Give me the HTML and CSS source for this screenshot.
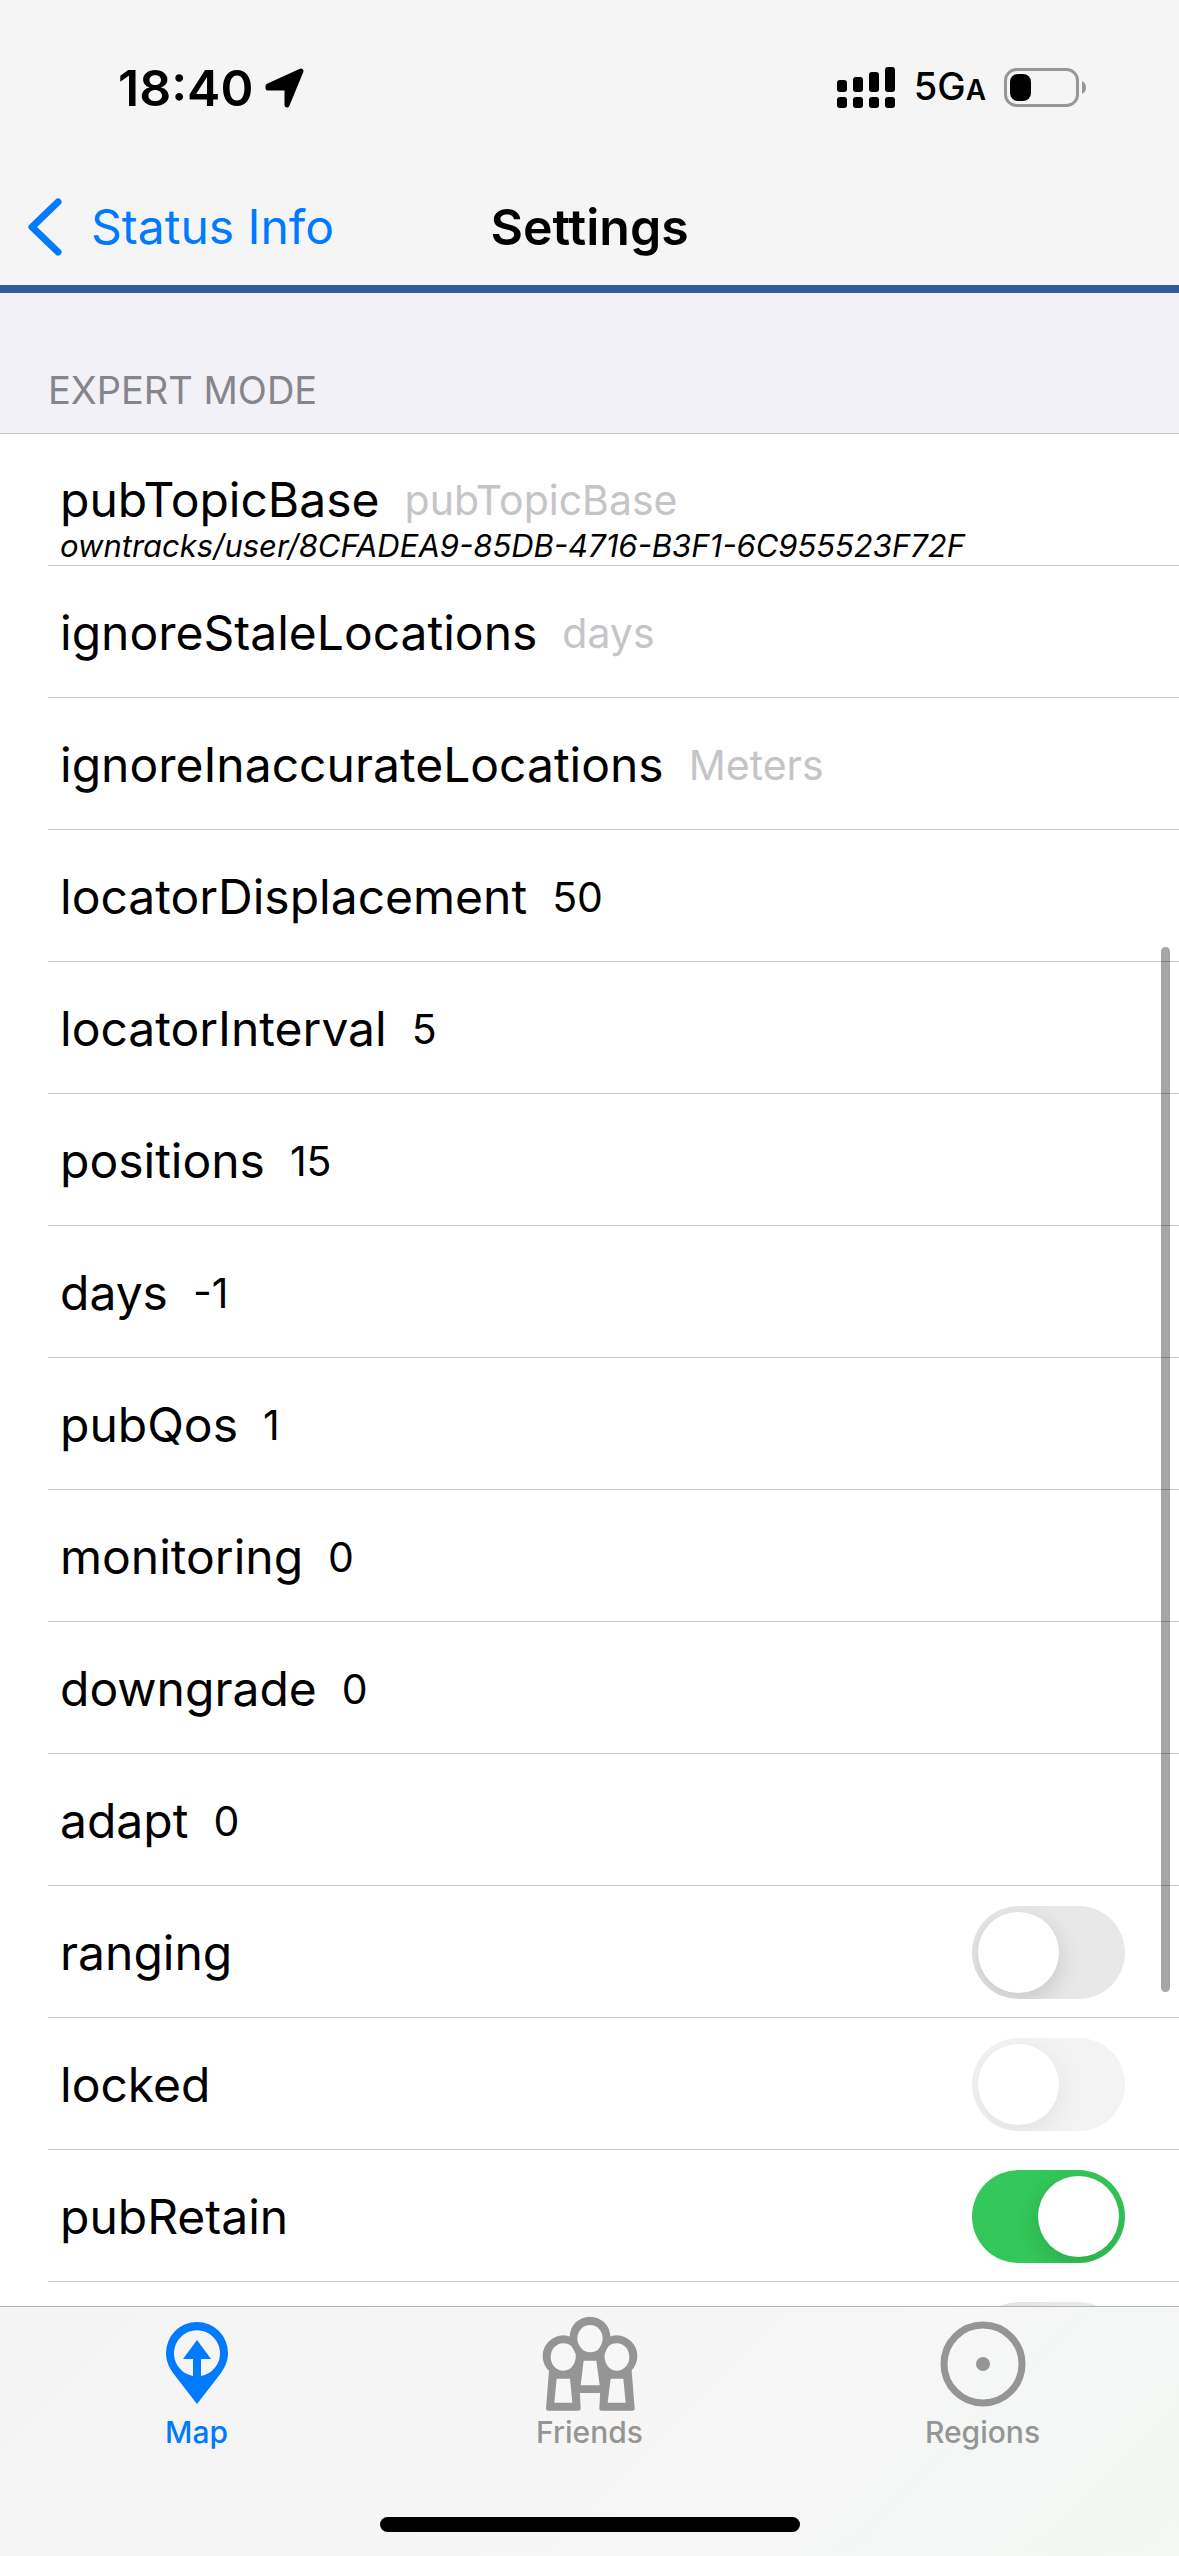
FILE: index.html
```html
<!DOCTYPE html>
<html lang="en">
<head>
    <meta charset="UTF-8">
    <meta name="viewport" content="width=device-width, initial-scale=1.0">
    <title>Settings</title>
    <link rel="stylesheet" href="styles.css">
</head>
<body>
    <header class="header">
        <div class="status-bar">
            <div class="status-left">
                <span class="clock">18:40</span>
                <svg class="location-icon" viewBox="0 0 40 40">
                    <path d="M36 3 L22 37 V20 H3 V18 Z" stroke="currentColor" stroke-width="5" stroke-linejoin="round" fill="currentColor"/>
                </svg>
            </div>
            <div class="status-right">
                <svg class="signal-icon" viewBox="0 0 58 42">
                    <rect x="0" y="13" width="10" height="12" rx="3"/>
                    <rect x="16" y="10" width="10" height="15" rx="3"/>
                    <rect x="32" y="5" width="10" height="20" rx="3"/>
                    <rect x="48" y="0" width="10" height="25" rx="3"/>
                    <rect x="0" y="30" width="10" height="11" rx="3"/>
                    <rect x="16" y="30" width="10" height="11" rx="3"/>
                    <rect x="32" y="30" width="10" height="11" rx="3"/>
                    <rect x="48" y="30" width="10" height="11" rx="3"/>
                </svg>
                <span class="network">5G<small>A</small></span>
                <svg class="battery-icon" viewBox="0 0 82 40">
                    <rect x="1.5" y="1.5" width="72" height="36" rx="11" fill="none" stroke="#979797" stroke-width="3"/>
                    <rect x="6" y="6" width="21" height="27" rx="8"/>
                    <path d="M78 13 Q82 15 82 19.5 Q82 24 78 26 Z" fill="#979797"/>
                </svg>
            </div>
        </div>
        <nav class="nav-bar">
            <a href="#status" class="back-link">
                <svg class="chevron" viewBox="0 0 34 58">
                    <path d="M30 4 L4 29 L30 54" fill="none" stroke="currentColor" stroke-width="7" stroke-linecap="round" stroke-linejoin="round"/>
                </svg>
                Status Info
            </a>
            <h1 class="nav-title">Settings</h1>
        </nav>
    </header>

    <main class="content">
        <h2 class="section-title">EXPERT MODE</h2>
        <form class="settings">
            <div class="setting setting-noted">
                <div class="setting-main">
                    <label for="pubTopicBase">pubTopicBase</label>
                    <input type="text" id="pubTopicBase" class="setting-input" placeholder="pubTopicBase">
                </div>
                <p class="setting-note">owntracks/user/8CFADEA9-85DB-4716-B3F1-6C955523F72F</p>
            </div>
            <div class="setting">
                <div class="setting-main">
                    <label for="ignoreStaleLocations">ignoreStaleLocations</label>
                    <input type="text" id="ignoreStaleLocations" class="setting-input" placeholder="days">
                </div>
            </div>
            <div class="setting">
                <div class="setting-main">
                    <label for="ignoreInaccurateLocations">ignoreInaccurateLocations</label>
                    <input type="text" id="ignoreInaccurateLocations" class="setting-input" placeholder="Meters">
                </div>
            </div>
            <div class="setting">
                <div class="setting-main">
                    <label for="locatorDisplacement">locatorDisplacement</label>
                    <input type="text" id="locatorDisplacement" class="setting-input" value="50">
                </div>
            </div>
            <div class="setting">
                <div class="setting-main">
                    <label for="locatorInterval">locatorInterval</label>
                    <input type="text" id="locatorInterval" class="setting-input" value="5">
                </div>
            </div>
            <div class="setting">
                <div class="setting-main">
                    <label for="positions">positions</label>
                    <input type="text" id="positions" class="setting-input" value="15">
                </div>
            </div>
            <div class="setting">
                <div class="setting-main">
                    <label for="days">days</label>
                    <input type="text" id="days" class="setting-input" value="-1">
                </div>
            </div>
            <div class="setting">
                <div class="setting-main">
                    <label for="pubQos">pubQos</label>
                    <input type="text" id="pubQos" class="setting-input" value="1">
                </div>
            </div>
            <div class="setting">
                <div class="setting-main">
                    <label for="monitoring">monitoring</label>
                    <input type="text" id="monitoring" class="setting-input" value="0">
                </div>
            </div>
            <div class="setting">
                <div class="setting-main">
                    <label for="downgrade">downgrade</label>
                    <input type="text" id="downgrade" class="setting-input" value="0">
                </div>
            </div>
            <div class="setting">
                <div class="setting-main">
                    <label for="adapt">adapt</label>
                    <input type="text" id="adapt" class="setting-input" value="0">
                </div>
            </div>
            <div class="setting">
                <div class="setting-main">
                    <label for="ranging">ranging</label>
                    <input type="checkbox" id="ranging" class="toggle">
                </div>
            </div>
            <div class="setting">
                <div class="setting-main">
                    <label for="locked">locked</label>
                    <input type="checkbox" id="locked" class="toggle" disabled>
                </div>
            </div>
            <div class="setting">
                <div class="setting-main">
                    <label for="pubRetain">pubRetain</label>
                    <input type="checkbox" id="pubRetain" class="toggle" checked>
                </div>
            </div>
            <div class="setting">
                <div class="setting-main">
                    <input type="checkbox" id="cmd" class="toggle" aria-label="cmd">
                </div>
            </div>
        </form>
        <div class="scroll-thumb"></div>
    </main>

    <footer class="tab-bar">
        <nav class="tabs">
            <a href="#map" class="tab active">
                <svg class="tab-icon" viewBox="0 0 96 96">
                    <path fill-rule="evenodd" d="M48 6 A31 31 0 0 0 17 37 C17 45 20 51 24 57 L48 88 L72 57 C76 51 79 45 79 37 A31 31 0 0 0 48 6 Z M52 60 V43 H62 L48 24 L34 43 H44 V60 A23 23 0 1 1 52 60 Z" fill="currentColor"/>
                </svg>
                Map
            </a>
            <a href="#friends" class="tab">
                <svg class="tab-icon" viewBox="124 76 288 288">
                    <g fill="currentColor" stroke="currentColor" stroke-linejoin="round">
                        <path d="M236 180 H301 L309 303 H228 Z" stroke-width="8"/>
                        <path d="M151 240 H228 L234 354 H142 Z" stroke-width="12"/>
                        <path d="M308 240 H387 L396 354 H302 Z" stroke-width="12"/>
                        <circle cx="188" cy="196" r="62" stroke="none"/>
                        <circle cx="348" cy="196" r="62" stroke="none"/>
                        <circle cx="268" cy="139" r="61" stroke="none"/>
                    </g>
                    <g class="icon-hole">
                        <path d="M188 158 C207 158 214 168 219 178 L225 190 C228 213 214 240 188 240 C165 240 150 221 150 199 C150 177 166 158 188 158 Z"/>
                        <path d="M348 158 C329 158 322 168 317 178 L312 190 C309 213 323 240 348 240 C371 240 386 221 386 199 C386 177 370 158 348 158 Z"/>
                        <path d="M268 103 C290 103 306 121 306 143 C306 157 300 166 294 175 C282 188 256 188 244 175 C236 166 230 157 230 143 C230 121 247 103 268 103 Z"/>
                        <path d="M249 210 H287 L297 284 H240 Z"/>
                        <path d="M168 264 H208 L215 336 H161 Z"/>
                        <path d="M330 264 H368 L375 336 H321 Z"/>
                    </g>
                </svg>
                Friends
            </a>
            <a href="#regions" class="tab">
                <svg class="tab-icon" viewBox="0 0 96 96">
                    <circle cx="48" cy="48" r="39" fill="none" stroke="currentColor" stroke-width="7"/>
                    <circle cx="48" cy="48" r="7" fill="currentColor"/>
                </svg>
                Regions
            </a>
        </nav>
        <div class="home-indicator"></div>
    </footer>
</body>
</html>
```
FILE: styles.css
```css
* {
    margin: 0;
    padding: 0;
    box-sizing: border-box;
    font-family: 'Inter', system-ui, -apple-system, sans-serif;
}

:root {
    --tint-color: #007aff;
    --bar-color: #f5f5f5;
    --brand-color: #335b9b;
    --section-color: #f2f1f7;
    --separator-color: #c6c6c8;
    --muted-color: #959595;
}

body {
    height: 100vh;
    display: flex;
    flex-direction: column;
    background-color: white;
    color: black;
    font-size: 48px;
    line-height: 62px;
    overflow: hidden;
}

a {
    color: inherit;
    text-decoration: none;
}

.header {
    flex: none;
    background-color: var(--bar-color);
    border-bottom: 8px solid var(--brand-color);
}

.status-bar {
    height: 170px;
    padding: 6px 93px 0 118px;
    display: flex;
    align-items: center;
    justify-content: space-between;
}

.status-left,
.status-right {
    display: flex;
    align-items: center;
}

.status-left {
    gap: 12px;
}

.clock {
    font-size: 50px;
    font-weight: 600;
}

.location-icon {
    width: 40px;
    height: 40px;
}

.signal-icon {
    width: 58px;
    height: 42px;
    margin-right: 19px;
}

.network {
    font-size: 38px;
    font-weight: 500;
    margin-right: 18px;
}

.network small {
    font-size: 28px;
    font-weight: 600;
}

.battery-icon {
    width: 82px;
    height: 40px;
}

.nav-bar {
    height: 115px;
    padding: 0 28px 2px;
    display: grid;
    grid-template-columns: 1fr auto 1fr;
    align-items: center;
}

.back-link {
    display: flex;
    align-items: center;
    gap: 29px;
    color: var(--tint-color);
}

.chevron {
    width: 34px;
    height: 58px;
}

.nav-title {
    font-size: 50px;
    font-weight: 600;
}

.content {
    position: relative;
    flex: 1;
    min-height: 0;
    overflow: hidden;
}

.section-title {
    padding: 74px 48px 20px;
    background-color: var(--section-color);
    border-bottom: 1px solid var(--separator-color);
    color: #85858b;
    font-size: 38px;
    font-weight: 400;
    line-height: 46px;
}

.setting {
    height: 132px;
    margin-left: 48px;
    padding: 2px 54px 0 12px;
    display: flex;
    flex-direction: column;
    justify-content: center;
    border-bottom: 1px solid var(--separator-color);
}

.setting-noted {
    padding-bottom: 4px;
    justify-content: flex-end;
}

.setting-main {
    display: flex;
    align-items: center;
    gap: 25px;
}

.setting-input {
    flex: 1;
    min-width: 0;
    border: none;
    outline: none;
    background: transparent;
    color: black;
    font-size: 41px;
    line-height: 50px;
}

.setting-input::placeholder {
    color: #c5c5c7;
}

.setting-note {
    font-size: 31px;
    font-style: italic;
    line-height: 30px;
    white-space: nowrap;
}

.toggle {
    appearance: none;
    width: 153px;
    height: 93px;
    margin-left: auto;
    padding: 6px;
    display: flex;
    border-radius: 47px;
    background-color: #e8e8e9;
    overflow: hidden;
}

.toggle::before {
    content: "";
    width: 81px;
    height: 81px;
    border-radius: 50%;
    background-color: white;
    box-shadow: 0 8px 24px rgba(0, 0, 0, 0.15);
}

.toggle:checked {
    justify-content: flex-end;
    background-color: #34c759;
}

.toggle:disabled {
    opacity: 0.5;
}

.scroll-thumb {
    position: absolute;
    top: 32.5%;
    right: 9px;
    width: 9px;
    height: 51.9%;
    border-radius: 5px;
    background-color: rgba(0, 0, 0, 0.35);
}

.tab-bar {
    flex: none;
    height: 250px;
    padding: 9px 0 24px;
    display: flex;
    flex-direction: column;
    align-items: center;
    justify-content: space-between;
    background: linear-gradient(135deg, #f4f4f4 0%, #f6f6f6 60%, #f3f8f4 100%);
    border-top: 1px solid #b2b2b2;
}

.tabs {
    width: 100%;
    display: grid;
    grid-template-columns: repeat(3, 1fr);
}

.tab {
    display: flex;
    flex-direction: column;
    align-items: center;
    color: var(--muted-color);
    font-size: 30px;
    font-weight: 500;
    line-height: 40px;
}

.tab.active {
    color: var(--tint-color);
}

.tab-icon {
    width: 96px;
    height: 96px;
}

.icon-hole {
    fill: #f7f7f7;
}

.home-indicator {
    width: 420px;
    height: 15px;
    border-radius: 8px;
    background-color: black;
}
```
